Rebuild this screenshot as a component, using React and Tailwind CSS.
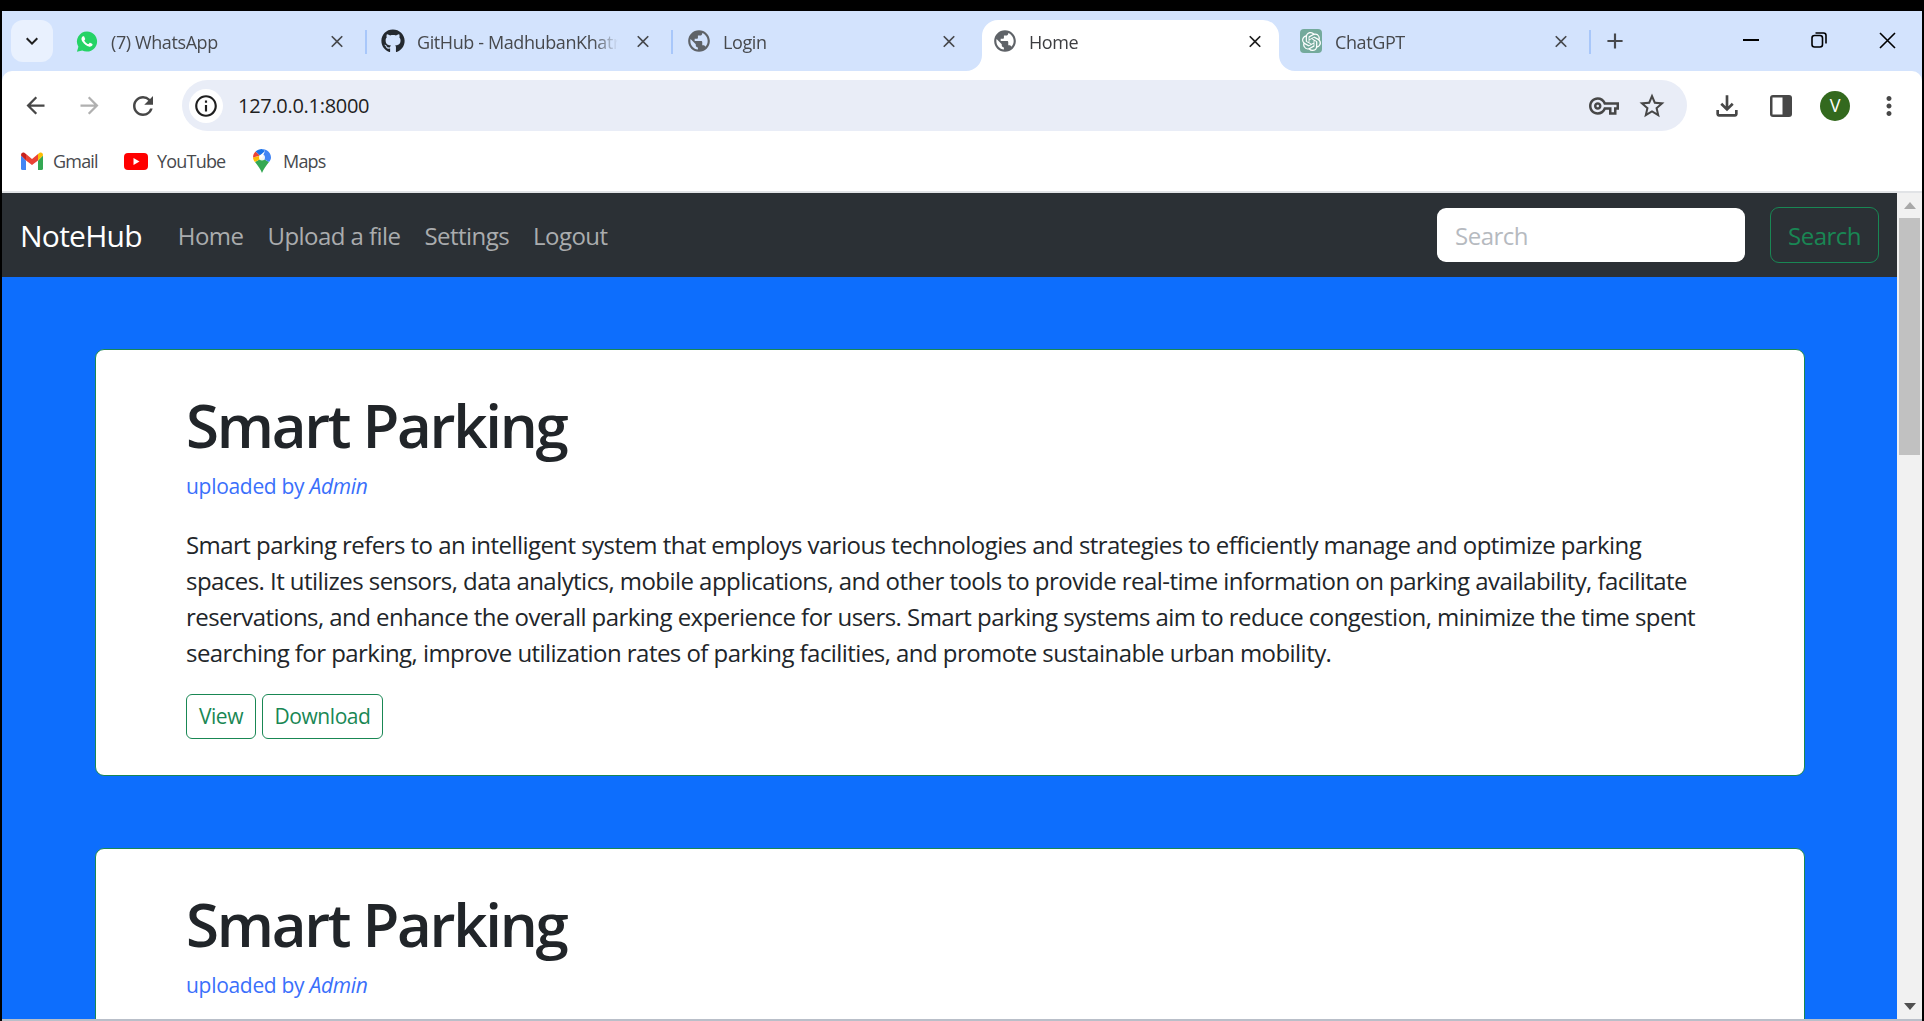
import { MdPublic, MdClose, MdAdd, MdArrowBack, MdArrowForward, MdRefresh, MdInfoOutline, MdOutlineVpnKey, MdStarBorder, MdOutlineFileDownload, MdMoreVert, MdKeyboardArrowDown } from 'react-icons/md'
import { FaGithub } from 'react-icons/fa'
import { SiOpenai } from 'react-icons/si'

const WhatsAppIcon = () => (
  <svg width="23" height="23" viewBox="0 0 24 24">
    <path d="M12 1A11 11 0 0 0 2.6 17.6L1 23.2l5.8-1.5A11 11 0 1 0 12 1Z" fill="#25d366" />
    <path
      d="M17.47 14.38c-.3-.15-1.76-.87-2.03-.97-.27-.1-.47-.15-.67.15-.2.3-.77.97-.95 1.17-.17.2-.35.22-.65.07-.3-.15-1.26-.46-2.4-1.48-.89-.79-1.49-1.77-1.66-2.07-.17-.3-.02-.46.13-.61.13-.13.3-.35.45-.52.15-.17.2-.3.3-.5.1-.2.05-.37-.03-.52-.07-.15-.67-1.62-.92-2.22-.24-.58-.49-.5-.67-.51h-.57c-.2 0-.52.07-.8.37-.27.3-1.04 1.02-1.04 2.49s1.07 2.89 1.22 3.09c.15.2 2.1 3.2 5.08 4.49.71.31 1.26.49 1.69.63.71.23 1.36.2 1.87.12.57-.09 1.76-.72 2.01-1.41.25-.7.25-1.29.17-1.41-.07-.13-.27-.2-.57-.35z"
      fill="#fff"
    />
  </svg>
)

const GlobeIcon = () => <MdPublic size={26} className="text-[#5f6368] -m-[2px]" />

const GptIcon = () => (
  <span className="w-[24px] h-[24px] rounded-[4px] bg-[#74aa9c] flex items-center justify-center text-white">
    <SiOpenai size={19} />
  </span>
)

const tabs = [
  { title: '(7) WhatsApp', icon: <WhatsAppIcon /> },
  { title: 'GitHub - MadhubanKhatri', icon: <FaGithub size={24} className="text-[#24292f] -mx-[1px]" />, sep: true },
  { title: 'Login', icon: <GlobeIcon />, sep: true },
  { title: 'Home', icon: <GlobeIcon />, active: true },
  { title: 'ChatGPT', icon: <GptIcon /> },
]

function Tab({ tab }) {
  return (
    <div className="w-[306px] h-[51px] flex shrink-0">
      <span className={`w-[2px] h-[24px] mt-[10px] shrink-0 ${tab.sep ? 'bg-[#a8c7fa]' : ''}`} />
      <div
        className={`relative flex-1 min-w-0 ml-[3px] mr-[4px] pl-[12px] pr-[14px] pb-[9px] flex items-center rounded-t-[16px] ${
          tab.active ? 'bg-white' : ''
        }`}
      >
        {tab.active && (
          <>
            <svg className="absolute bottom-0 -left-[16px]" width="16" height="16" viewBox="0 0 16 16">
              <path d="M16 0V16H0A16 16 0 0 0 16 0Z" fill="#fff" />
            </svg>
            <svg className="absolute bottom-0 -right-[16px]" width="16" height="16" viewBox="0 0 16 16">
              <path d="M0 0V16H16A16 16 0 0 1 0 0Z" fill="#fff" />
            </svg>
          </>
        )}
        <span className="w-[22px] h-[24px] shrink-0 flex items-center justify-center">{tab.icon}</span>
        <span
          className={`ml-[13px] mr-[15px] pt-[2px] flex-1 min-w-0 whitespace-nowrap overflow-hidden text-[18px] tracking-[-0.4px] [mask-image:linear-gradient(to_right,black_88%,transparent)] ${
            tab.active ? 'text-[#3c3d40]' : 'text-[#47494d]'
          }`}
        >
          {tab.title}
        </span>
        <span className="w-[20px] flex justify-center shrink-0">
          <MdClose size={21} className={tab.active ? 'text-[#1f1f1f]' : 'text-[#47494d]'} />
        </span>
      </div>
    </div>
  )
}

function TabStrip() {
  return (
    <div className="h-[60px] bg-[#d3e3fd] flex pl-[9px] pt-[9px] shrink-0">
      <div className="w-[42px] h-[42px] rounded-[12px] bg-[#e9f1fe] flex items-center justify-center shrink-0">
        <MdKeyboardArrowDown size={24} className="text-[#1f1f1f]" />
      </div>
      <div className="flex ml-[6px]">
        {tabs.map((t) => (
          <Tab key={t.title} tab={t} />
        ))}
      </div>
      <span className="w-[2px] h-[24px] mt-[10px] bg-[#a8c7fa] shrink-0" />
      <span className="ml-[11px] w-[26px] h-[24px] mt-[9px] flex items-center justify-center shrink-0">
        <MdAdd size={26} className="text-[#47494d]" />
      </span>
      <span className="ml-[114px] w-[18px] h-[24px] mt-[8px] flex items-center justify-center shrink-0">
        <svg width="16" height="2" viewBox="0 0 16 2"><path d="M0 1H16" stroke="#000" strokeWidth="2" /></svg>
      </span>
      <span className="ml-[50px] w-[18px] h-[24px] mt-[8px] flex items-center justify-center shrink-0">
        <svg width="16" height="16" viewBox="0 0 16 16" fill="none" stroke="#000" strokeWidth="1.6">
          <rect x="1" y="3.5" width="10.5" height="11.5" rx="2.5" />
          <path d="M4.5 1H12.5Q15 1 15 3.5V11.5" />
        </svg>
      </span>
      <span className="ml-[50px] w-[18px] h-[24px] mt-[8px] flex items-center justify-center shrink-0">
        <svg width="17" height="17" viewBox="0 0 17 17" fill="none" stroke="#000" strokeWidth="1.6"><path d="M1 1L16 16M16 1L1 16" /></svg>
      </span>
    </div>
  )
}

function Toolbar() {
  return (
    <div className="h-[60px] flex items-start pt-[9px] shrink-0">
      <div className="ml-[6px] flex h-[51px] items-center">
        <span className="w-[54px] flex justify-center"><MdArrowBack size={27} className="text-[#474747]" /></span>
        <span className="w-[54px] flex justify-center"><MdArrowForward size={27} className="text-[#b0b0b0]" /></span>
        <span className="w-[54px] flex justify-center"><MdRefresh size={30} className="text-[#474747]" /></span>
      </div>
      <div className="ml-[12px] w-[1505px] h-[51px] rounded-full bg-[#e9edf7] flex items-center pl-[7px] pr-[11px]">
        <span className="w-[34px] h-[34px] rounded-full bg-white flex items-center justify-center">
          <MdInfoOutline size={26} className="text-[#1f1f1f]" />
        </span>
        <span className="ml-[15px] text-[20px] tracking-[-0.3px] text-[#1f1f1f]">127.0.0.1:8000</span>
        <span className="ml-auto w-[48px] flex justify-center"><MdOutlineVpnKey size={30} className="text-[#474747]" /></span>
        <span className="w-[48px] flex justify-center"><MdStarBorder size={30} className="text-[#474747]" /></span>
      </div>
      <div className="ml-[13px] flex h-[51px] items-center">
        <span className="w-[54px] flex justify-center"><MdOutlineFileDownload size={32} className="text-[#474747]" /></span>
        <span className="w-[54px] flex justify-center">
          <svg width="22" height="22" viewBox="0 0 22 22">
            <rect x="0" y="0" width="22" height="22" rx="3" fill="#474747" />
            <rect x="2.5" y="2.5" width="10" height="17" fill="#fff" />
          </svg>
        </span>
        <span className="w-[54px] flex justify-center">
          <span className="w-[30px] h-[30px] rounded-full bg-[#33691e] text-white text-[18px] flex items-center justify-center">V</span>
        </span>
        <span className="w-[54px] flex justify-center"><MdMoreVert size={30} className="text-[#474747]" /></span>
      </div>
    </div>
  )
}

const GmailIcon = () => (
  <svg width="22" height="18" viewBox="0 0 22 18">
    <path d="M0 3.5V16.5Q0 18 1.5 18H5V8.5Z" fill="#4285f4" />
    <path d="M22 3.5V16.5Q22 18 20.5 18H17V8.5Z" fill="#34a853" />
    <path d="M0 3.5Q0 0 3 .5L5 2V8.5Z" fill="#c5221f" />
    <path d="M5 2L11 7L17 2V8.5L11 13L5 8.5Z" fill="#ea4335" />
    <path d="M17 2L19 .5Q22 0 22 3.5L17 8.5Z" fill="#fbbc04" />
  </svg>
)

const YoutubeIcon = () => (
  <svg width="24" height="17" viewBox="0 0 24 17">
    <rect width="24" height="17" rx="4" fill="#ff0000" />
    <path d="M9.5 5V12L15.5 8.5Z" fill="#fff" />
  </svg>
)

const MapsIcon = () => (
  <svg width="18" height="24" viewBox="0 0 18 24">
    <path d="M9 24C7.5 19.5 4.5 16.5 2 13L9 9L16 13C13.5 16.5 10.5 19.5 9 24Z" fill="#34a853" />
    <path d="M2 13C.7 11.5 0 10 0 8.5L6 7L9 9Z" fill="#fbbc04" />
    <path d="M0 8.5C0 6 1 4 2.6 2.6L7 6.5Z" fill="#ea4335" />
    <path d="M2.6 2.6C4.2 1 6.5 0 9 0L12 2L7 6.5Z" fill="#1a73e8" />
    <path d="M9 0C14 0 18 4 18 8.5C18 10 17.3 11.5 16 13L9 9L12 2Z" fill="#4285f4" />
    <circle cx="9" cy="8.5" r="3" fill="#fff" opacity=".9" />
  </svg>
)

function Bookmarks() {
  return (
    <div className="h-[60px] flex items-center pl-[19px] text-[18px] tracking-[-0.8px] text-[#47494d] shrink-0">
      <GmailIcon />
      <span className="ml-[10px] w-[71px]">Gmail</span>
      <YoutubeIcon />
      <span className="ml-[9px] w-[96px]">YouTube</span>
      <MapsIcon />
      <span className="ml-[12px]">Maps</span>
    </div>
  )
}

function Navbar() {
  return (
    <nav className="h-[84px] bg-[#2b3035] flex items-center pl-[18px] pr-[18px] shrink-0">
      <span className="text-[30px] tracking-[-0.75px] text-white">NoteHub</span>
      <div className="ml-[36px] pt-[2px] flex gap-[24px] text-[24px] tracking-[-0.55px] text-[#aaacae]">
        <span>Home</span>
        <span>Upload a file</span>
        <span>Settings</span>
        <span>Logout</span>
      </div>
      <input
        placeholder="Search"
        className="ml-auto w-[308px] h-[54px] rounded-[9px] bg-white px-[18px] pt-[1px] text-[24px] tracking-[-0.5px] placeholder:text-[#b6babf] outline-none"
      />
      <button className="ml-[25px] w-[109px] h-[56px] pt-[2px] rounded-[9px] border border-[#198754] text-[24px] tracking-[-0.5px] text-[#198754]">
        Search
      </button>
    </nav>
  )
}

function Card() {
  return (
    <div className="bg-white rounded-[9px] border border-[#198754] pl-[90px] pr-[91px] pt-[39px] pb-[36px] text-[#212529] mb-[72px]">
      <h1 className="text-[60px] leading-[72px] font-[560] tracking-[-2.3px]">Smart Parking</h1>
      <p className="mt-[9px] text-[21px] leading-[32px] tracking-[-0.3px] text-[#3a6ffb]">
        uploaded by <em>Admin</em>
      </p>
      <p className="mt-[25px] text-[24px] leading-[36px] tracking-[-0.55px]">
        Smart parking refers to an intelligent system that employs various technologies and strategies to efficiently manage and optimize parking spaces. It utilizes sensors, data analytics, mobile applications, and other tools to provide real-time information on parking availability, facilitate reservations, and enhance the overall parking experience for users. Smart parking systems aim to reduce congestion, minimize the time spent searching for parking, improve utilization rates of parking facilities, and promote sustainable urban mobility.
      </p>
      <div className="mt-[23px] flex gap-[6px] text-[21px] tracking-[-0.45px] text-[#198754]">
        <button className="w-[70px] h-[45px] pt-[1px] rounded-[6px] border border-[#198754]">View</button>
        <button className="w-[121px] h-[45px] pt-[1px] rounded-[6px] border border-[#198754]">Download</button>
      </div>
    </div>
  )
}

function Scrollbar() {
  return (
    <div className="w-[25px] bg-[#f1f1f1] flex flex-col items-center shrink-0">
      <div className="h-[25px] flex items-center justify-center">
        <svg width="12" height="7" viewBox="0 0 12 7"><path d="M6 0L12 7H0Z" fill="#a8a8a8" /></svg>
      </div>
      <div className="w-[21px] h-[237px] bg-[#c1c1c1]" />
      <div className="mt-auto h-[25px] flex items-center justify-center">
        <svg width="12" height="7" viewBox="0 0 12 7"><path d="M0 0H12L6 7Z" fill="#505050" /></svg>
      </div>
    </div>
  )
}

export default function App() {
  return (
    <div className="w-[1924px] h-[1021px] bg-black pt-[11px] pl-[2px] pr-[2px] overflow-hidden font-['Open_Sans',sans-serif]">
      <div className="h-[1010px] bg-[#d3e3fd] flex flex-col">
        <TabStrip />
        <div className="flex-1 min-h-0 flex flex-col">
          <div className="h-[120px] bg-white rounded-t-[10px] flex flex-col shrink-0">
            <Toolbar />
            <Bookmarks />
          </div>
          <div className="h-[2px] bg-[#e1e3e6] shrink-0" />
          <div className="flex-1 min-h-0 flex">
            <div className="flex-1 min-w-0 flex flex-col bg-[#0d6efd] overflow-hidden">
              <Navbar />
              <div className="pt-[72px] pl-[93px] pr-[92px]">
                <Card />
                <Card />
              </div>
            </div>
            <Scrollbar />
          </div>
          <div className="h-[2px] bg-[#b9bfc9] shrink-0" />
        </div>
      </div>
    </div>
  )
}
